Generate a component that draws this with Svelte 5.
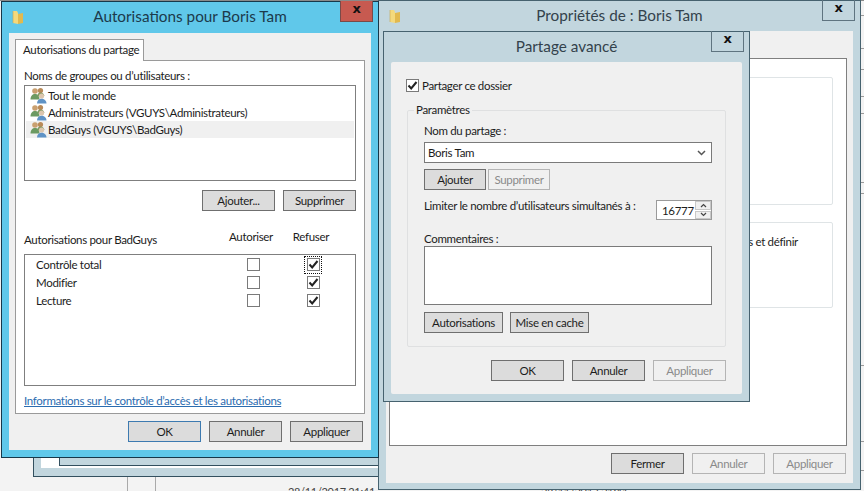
<script>
  const users = ['Tout le monde', 'Administrateurs (VGUYS\\Administrateurs)', 'BadGuys (VGUYS\\BadGuys)'];
  const perms = [
    { name: 'Contrôle total', focus: true },
    { name: 'Modifier', focus: false },
    { name: 'Lecture', focus: false }
  ];
</script>

{#snippet folder()}
  <svg class="folder" width="12" height="17" viewBox="0 0 12 17">
    <path d="M1 2h4l1 2v11l-5-1z" fill="#f4d97c"/>
    <path d="M6 5l5-1v10l-5 1z" fill="#e2b94e"/>
    <path d="M1 2v12" stroke="#c9a850" stroke-width="1" opacity=".6"/>
  </svg>
{/snippet}

{#snippet group()}
  <svg class="group" width="17" height="17" viewBox="0 0 17 17">
    <circle cx="5" cy="4" r="2.800" fill="#c9a070"/>
    <path d="M0.500 12.500c0-3.500 2-5.500 4.500-5.500s4.500 2 4.500 5.500z" fill="#6c9a62"/>
    <circle cx="10.500" cy="3.500" r="2.600" fill="#b98a58"/>
    <path d="M7 9c.5-2.500 2-3.500 3.500-3.500S14 6.500 14.500 9z" fill="#7f9a62"/>
    <circle cx="11.500" cy="9" r="2.600" fill="#dcc6ae"/>
    <path d="M7 16.500c0-3 2-4.800 4.500-4.800s5 1.800 5 4.800z" fill="#5f93c6"/>
  </svg>
{/snippet}

{#snippet check(on)}
  <span class="box">
    {#if on}
      <svg width="11" height="11" viewBox="0 0 11 11"><path d="M1.500 5.500l2.700 3L9.500 2" fill="none" stroke="#222" stroke-width="2"/></svg>
    {/if}
  </span>
{/snippet}

<div class="desktop">
  <div class="topstrip"></div>
  <div class="vline a"></div>
  <div class="vline b"></div>
  <div class="stamp one">28/11/2017 21:41</div>
  <div class="stamp two">28/11/2017 21:41</div>
  {#each [15, 48, 69, 96, 113, 182, 193, 365, 441, 470] as y}
    <div class="edge" style:top="{y}px"></div>
  {/each}

  <div class="ghost g1"></div>
  <div class="ghost g2"></div>

  <!-- Propriétés -->
  <section class="win idle props">
    <header class="title">
      {@render folder()}
      <h2>Propriétés de : Boris Tam</h2>
      <span class="close">x</span>
    </header>
    <div class="client props-client">
      <div class="sheet">
        <div class="card c1"></div>
        <div class="card c2"><span>les et définir</span></div>
      </div>
      <div class="actions">
        <button>Fermer</button>
        <button class="off">Annuler</button>
        <button class="off">Appliquer</button>
      </div>
    </div>
  </section>

  <!-- Partage avancé -->
  <section class="win idle adv">
    <header class="title">
      <h2>Partage avancé</h2>
      <span class="close">x</span>
    </header>
    <div class="client adv-client">
      <label class="share">{@render check(true)}<span>Partager ce dossier</span></label>
      <fieldset>
        <legend>Paramètres</legend>
        <div class="lbl name-lbl">Nom du partage :</div>
        <div class="combo"><span>Boris Tam</span>
          <svg width="9" height="6" viewBox="0 0 9 6"><path d="M1 1l3.500 3.500L8 1" fill="none" stroke="#555" stroke-width="1.500"/></svg>
        </div>
        <div class="rowbtns first">
          <button class="add">Ajouter</button>
          <button class="off del">Supprimer</button>
        </div>
        <div class="limit">
          <span class="limit-text">Limiter le nombre d’utilisateurs simultanés à :</span>
          <div class="spin">
            <span class="val">16777</span>
            <div class="arrows">
              <i><svg width="7" height="5" viewBox="0 0 7 5"><path d="M1 4l2.500-2.500L6 4" fill="none" stroke="#444" stroke-width="1.200"/></svg></i>
              <i><svg width="7" height="5" viewBox="0 0 7 5"><path d="M1 1l2.500 2.500L6 1" fill="none" stroke="#444" stroke-width="1.200"/></svg></i>
            </div>
          </div>
        </div>
        <div class="lbl com-lbl">Commentaires :</div>
        <div class="memo"></div>
        <div class="rowbtns second">
          <button class="perm">Autorisations</button>
          <button class="cache">Mise en cache</button>
        </div>
      </fieldset>
      <div class="actions adv-actions">
        <button>OK</button>
        <button>Annuler</button>
        <button class="off">Appliquer</button>
      </div>
    </div>
  </section>

  <!-- Autorisations -->
  <section class="win active perms">
    <header class="title">
      {@render folder()}
      <h2>Autorisations pour Boris Tam</h2>
      <span class="close red">x</span>
    </header>
    <div class="client perms-client">
      <div class="tab">Autorisations du partage</div>
      <div class="panel">
        <div class="lbl">Noms de groupes ou d’utilisateurs :</div>
        <ul class="users">
          {#each users as u, i}
            <li class:sel={i === 2}>{@render group()}<span>{u}</span></li>
          {/each}
        </ul>
        <div class="listbtns">
          <button>Ajouter...</button>
          <button>Supprimer</button>
        </div>
        <div class="permhead">
          <span class="ph-name">Autorisations pour BadGuys</span>
          <span class="ph-col">Autoriser</span>
          <span class="ph-col">Refuser</span>
        </div>
        <div class="permlist">
          {#each perms as p}
            <div class="permrow">
              <span class="pname">{p.name}</span>
              <span class="pcell">{@render check(false)}</span>
              <span class="pcell" class:focus={p.focus}>{@render check(true)}</span>
            </div>
          {/each}
        </div>
        <a class="info" href="#top">Informations sur le contrôle d’accès et les autorisations</a>
      </div>
      <div class="actions perm-actions">
        <button class="def">OK</button>
        <button>Annuler</button>
        <button>Appliquer</button>
      </div>
    </div>
  </section>
</div>

<style>
  :global(body) { margin: 0; background: #f4f4f4; }
  .desktop {
    position: relative; width: 864px; height: 491px; overflow: hidden;
    background: #f3f3f3;
    font-family: "Lato", "Liberation Sans", sans-serif;
    font-size: 11.5px; color: #1c1c1c; letter-spacing: -0.32px;
  }
  .topstrip { position: absolute; left: 0; right: 0; top: 0; height: 1px; background: #8a8a8a; }
  .vline { position: absolute; top: 477px; bottom: 0; width: 1px; background: #a9a9a9; }
  .vline.a { left: 127px; }
  .vline.b { left: 155px; }
  .stamp { position: absolute; top: 485px; font-size: 11px; color: #444; }
  .stamp.one { left: 288px; }
  .stamp.two { left: 541px; }
  .edge { position: absolute; left: 861px; width: 3px; height: 1px; background: #9a9a9a; }
  .ghost { position: absolute; background: #fff; border: 1px solid #33505f; border-top: 0; }
  .g1 { left: 33px; top: 440px; width: 350px; height: 36px; box-shadow: inset 0 -8px 0 #c2d6de, inset 7px 0 0 #c2d6de; }
  .g2 { left: 59px; top: 440px; width: 330px; height: 25px; box-shadow: inset 0 -8px 0 #c2d6de; }

  .win { position: absolute; box-sizing: border-box; border: 1px solid #243f4e; display: flex; flex-direction: column; }
  .active { background: #60c8ea; border-color: #17384a; }
  .idle { background: #c2d6de; border-color: #46626f; }
  .title { position: relative; height: 30px; box-sizing: border-box; padding-bottom: 2px; flex: none; display: flex; align-items: center; justify-content: center; }
  .title h2 { margin: 0; font-size: 15.3px; font-weight: 400; color: #1c3a4c; letter-spacing: 0; }
  .idle .title h2 { color: #33424c; }
  .folder { position: absolute; left: 10px; top: 7px; }
  .close {
    position: absolute; top: -1px; right: 5px; width: 33px; height: 21px; box-sizing: border-box;
    border: 1px solid #5f7480; border-top: 0; text-align: center; font: 700 13px/16px "DejaVu Sans", sans-serif; color: #111;
  }
  .close.red { background: #c75a50; border-color: #7a4a48; }
  .client { flex: 1; background: #f0f0f0; margin: 0 7px 7px; box-sizing: border-box; }

  button {
    box-sizing: border-box; width: 73px; height: 21px; padding: 0; background: #dcdcdc; border: 1px solid #6f6f6f;
    font: inherit; color: #1c1c1c; letter-spacing: inherit;
  }
  button.off { background: #f0f0f0; border-color: #b4b4b4; color: #8a8a8a; }
  button.def { border-color: #3d7ab0; }
  .actions { display: flex; justify-content: flex-end; gap: 8px; }
  .lbl { line-height: 16px; }

  /* Autorisations */
  .perms { left: 1px; top: 1px; width: 378px; height: 457px; }
  .perms-client { padding: 6px 6px 0 6px; margin-top: 1px; }
  .tab {
    position: relative; z-index: 1; box-sizing: border-box; width: 129px; height: 22px; margin-bottom: -1px;
    background: #fff; border: 1px solid #9a9a9a; border-bottom: 0; padding: 1px 0 0 7px; line-height: 18px; white-space: nowrap;
  }
  .panel { box-sizing: border-box; height: 354px; background: #fff; border: 1px solid #9a9a9a; padding: 7px 8px 0; display: flex; flex-direction: column; }
  .users { list-style: none; margin: 1px 0 0; padding: 1px; box-sizing: border-box; height: 96px; border: 1px solid #7f7f7f; }
  .users li { display: flex; align-items: center; height: 17px; padding-left: 4px; gap: 1px; white-space: nowrap; }
  .users li.sel { background: #f0f0f0; }
  .group { flex: none; }
  .listbtns { display: flex; justify-content: flex-end; gap: 8px; margin-top: 9px; }
  .permhead { display: grid; grid-template-columns: 197px 60px 60px; margin-top: 19px; height: 24px; align-items: start; }
  .ph-name { padding-top: 3px; }
  .ph-col { text-align: center; }
  .permlist { box-sizing: border-box; height: 132px; border: 1px solid #7f7f7f; }
  .permrow { display: grid; grid-template-columns: 198px 60px 60px; height: 18px; align-items: center; }
  .pname { padding-left: 11px; }
  .pcell { position: relative; display: flex; justify-content: center; }
  .focus::after { content: ""; position: absolute; left: 21px; top: -2px; width: 16px; height: 16px; border: 1px dotted #111; }
  .box { display: inline-flex; align-items: center; justify-content: center; box-sizing: border-box; width: 13px; height: 13px; background: #fff; border: 1px solid #7a7a7a; }
  .info { margin-top: 7px; color: #2b6cb0; text-decoration: underline; line-height: 16px; white-space: nowrap; }
  .perm-actions { margin-top: 7px; padding-right: 2px; }

  /* Propriétés */
  .props { left: 378px; top: 0; width: 483px; height: 490px; }
  .props-client { padding: 27px 6px 0 3px; margin: 0 7px 6px; }
  .sheet { position: relative; box-sizing: border-box; height: 388px; background: #fff; border: 1px solid #7f7f7f; }
  .card { position: absolute; right: 13px; left: 10px; box-sizing: border-box; border: 1px solid #dfe4e6; border-radius: 2px; }
  .c1 { top: 18px; height: 128px; }
  .c2 { top: 163px; height: 86px; }
  .c2 span { position: absolute; left: 339px; top: 12px; white-space: nowrap; }
  .props-client .actions { margin-top: 7px; padding-right: 1px; }

  /* Partage avancé */
  .adv { left: 383px; top: 31px; width: 367px; height: 371px; }
  .adv-client { padding: 0 16px 0 15px; border-radius: 2px; }
  .share { display: flex; align-items: center; gap: 3px; margin-top: 16px; height: 14px; }
  fieldset { box-sizing: border-box; margin: 10px 0 0 1px; height: 245px; border: 1px solid #dfe0e1; border-radius: 2px; padding: 0 0 0 16px; display: flex; flex-direction: column; }
  legend { padding: 0 2px; margin-left: -10px; line-height: 16px; }
  .name-lbl { margin-top: 5px; }
  .combo { box-sizing: border-box; width: 288px; height: 21px; margin-top: 3px; background: #fff; border: 1px solid #7a7a7a; display: flex; align-items: center; justify-content: space-between; padding: 0 5px 0 3px; }
  .rowbtns { display: flex; }
  .first { margin-top: 6px; }
  .add { width: 62px; }
  .del { width: 62px; margin-left: 2px; }
  .limit { display: flex; align-items: flex-start; justify-content: space-between; width: 288px; margin-top: 6px; height: 24px; }
  .limit-text { margin-top: 2px; line-height: 16px; white-space: nowrap; }
  .spin { box-sizing: border-box; width: 56px; height: 20px; margin-top: 4px; background: #fff; border: 1px solid #9a9a9a; display: flex; align-items: center; justify-content: space-between; }
  .val { padding-left: 5px; }
  .arrows { display: flex; flex-direction: column; width: 16px; height: 18px; gap: 1px; }
  .arrows i { flex: 1; display: flex; align-items: center; justify-content: center; background: #f0f0f0; border: 1px solid #c8c8c8; box-sizing: border-box; }
  .com-lbl { margin-top: 11px; }
  .memo { box-sizing: border-box; width: 288px; height: 59px; background: #fff; border: 1px solid #7a7a7a; margin-top: -1px; }
  .second { margin-top: 7px; gap: 7px; }
  .perm, .cache { width: 79px; }
  .adv-actions { margin-top: 13px; }
</style>
